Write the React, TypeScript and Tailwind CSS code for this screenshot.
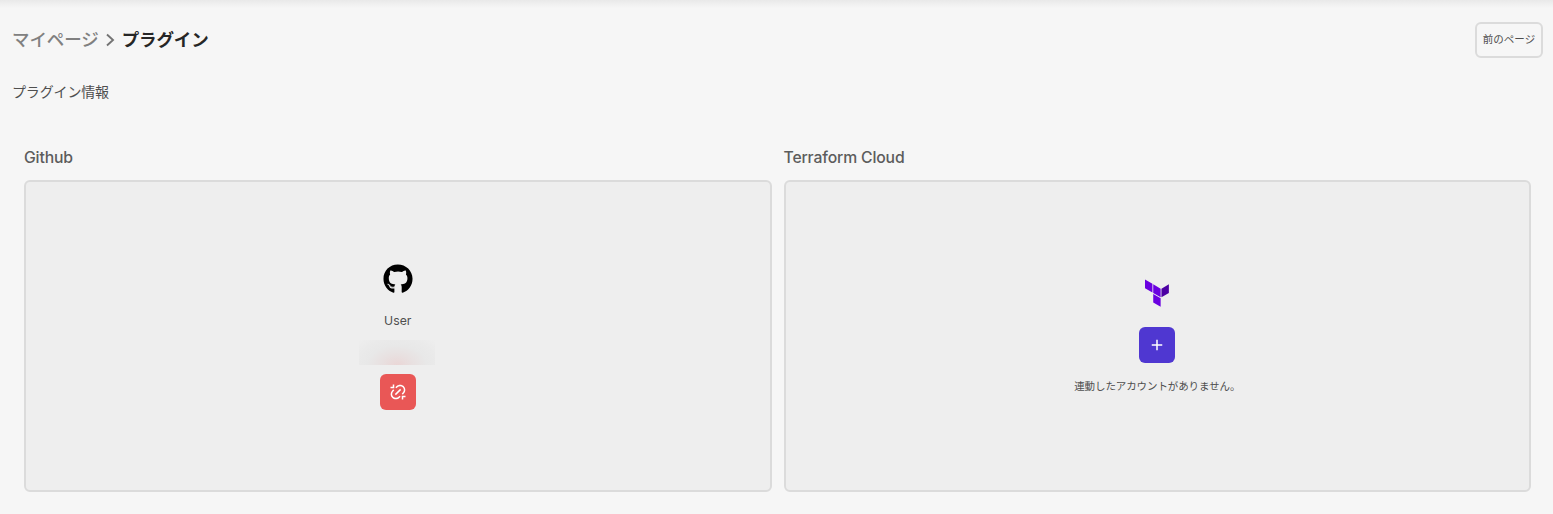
import type { ReactNode } from "react";
import { FaGithub } from "react-icons/fa";
import { RiAddLine, RiLinkUnlink } from "react-icons/ri";

function TerraformLogo() {
  return (
    <svg width="30" height="30" viewBox="-1.6 -1 128 128" className="block">
      <path
        fill="#6a00e0"
        d="M77.941 44.5v36.836L46.324 62.918V26.082zM11.242 42.36 42.86 60.776V23.941L11.242 5.523zM77.941 85.375 46.324 66.957v36.82l31.617 18.418z"
      />
      <path fill="#4c00a3" d="m81.41 81.336 31.633-18.418V26.082L81.41 44.5z" />
    </svg>
  );
}

function PluginCard({ title, children }: { title: string; children: ReactNode }) {
  return (
    <section className="min-w-0 flex-1">
      <h2 className="h-[34px] text-[15.75px] leading-6 font-medium tracking-[-0.01em] text-[#5c5c5c]">{title}</h2>
      <div className="flex h-[312px] flex-col items-center rounded-md border-2 border-[#dbdbdb] bg-[#eeeeee]">
        {children}
      </div>
    </section>
  );
}

export default function App() {
  return (
    <div className="h-[514px] overflow-hidden bg-[#f6f6f6] font-['Inter','Noto_Sans_CJK_JP',sans-serif] text-[#4f4f4f]">
      <div className="h-2 bg-linear-to-b from-[#e9e9e9] to-[#f6f6f6]" />
      <header className="flex items-start justify-between pt-[14px] pr-[10px] pl-3">
        <nav className="flex h-9 items-center text-[17.5px] leading-none">
          <span className="-mr-px font-medium tracking-[-0.1px] text-[#808080]">マイページ</span>
          <svg width="9" height="14" viewBox="0 0 9 14" className="mr-[7px] ml-2" fill="none" stroke="#747474" strokeWidth="1.9">
            <path d="m1 1.5 6 5.5-6 5.5" />
          </svg>
          <span className="font-bold tracking-[-0.1px] text-[#262626]">プラグイン</span>
        </nav>
        <button className="h-9 w-[68px] rounded-md border-2 border-[#dbdbdb] text-[10.5px] leading-none whitespace-nowrap">
          前のページ
        </button>
      </header>
      <p className="mt-[23px] h-[22px] pl-3 text-[14px] leading-[22px] tracking-[-0.15px]">プラグイン情報</p>
      <main className="mt-[43px] flex gap-3 pr-[22px] pl-6">
        <PluginCard title="Github">
          <FaGithub size={30} className="mt-[82px] text-black" />
          <span className="mt-[17px] h-5 text-[12.25px] leading-5">User</span>
          <div className="mt-[9px] mr-[2px] h-[25px] w-[76px] bg-[radial-gradient(ellipse_at_50%_100%,#ead6d6_0%,#e8e0e0_28%,#e8e8e8_55%,#eaeaea_75%,#eeeeee_100%)]" />
          <button aria-label="unlink" className="mt-[9px] flex size-9 items-center justify-center rounded-md bg-[#e95756] text-white">
            <RiLinkUnlink size={18} />
          </button>
        </PluginCard>
        <PluginCard title="Terraform Cloud">
          <div className="mt-[96px]">
            <TerraformLogo />
          </div>
          <button aria-label="add" className="mt-[19px] flex size-9 items-center justify-center rounded-md bg-[#4f37d1] text-white">
            <RiAddLine size={18} />
          </button>
          <p className="mt-[14px] text-[10.5px] leading-5 tracking-[-0.1px]">連動したアカウントがありません。</p>
        </PluginCard>
      </main>
    </div>
  );
}
